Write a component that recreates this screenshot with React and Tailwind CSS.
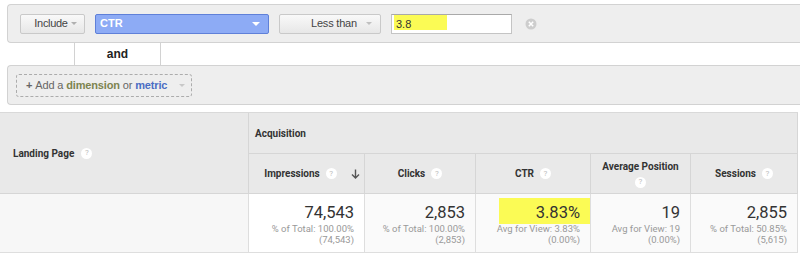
import React from "react";

const Caret = ({ color = "border-t-[#b0b0b0]", size = "border-x-[3px] border-t-[3px]" }) => (
  <span className={`inline-block w-0 h-0 border-x-transparent ${size} ${color}`} />
);

const Help = ({ className = "" }) => (
  <span
    className={`inline-flex items-center justify-center w-[11px] h-[11px] rounded-full bg-white text-[8px] font-normal text-[#bdbdbd] leading-none ${className}`}
  >
    ?
  </span>
);

function FilterBar() {
  return (
    <div className="pt-[4px] font-['Liberation_Sans',Arial,sans-serif]">
      {/* condition row */}
      <div className="ml-[7px] h-[39px] bg-[#eeeeee] border border-r-0 border-[#d2d2d2] rounded-l-[4px] flex items-center">
        <button className="ml-[12px] w-[65px] h-[20px] rounded-[2px] border border-[#c9c9c9] bg-gradient-to-b from-[#f9f9f9] to-[#e7e7e7] flex items-center justify-center gap-[3px] pl-[6px] text-[11px] text-[#444] tracking-[-0.3px]">
          Include
          <Caret />
        </button>
        <div className="ml-[10px] w-[174px] h-[20px] rounded-[2px] border border-[#5f80d8] bg-[#8dabf5] flex items-center justify-between pl-[4px] pr-[8px] text-[11px] font-bold text-white">
          CTR
          <Caret color="border-t-white" size="border-x-[4px] border-t-[4px]" />
        </div>
        <button className="ml-[10px] w-[102px] h-[20px] rounded-[2px] border border-[#c9c9c9] bg-gradient-to-b from-[#f9f9f9] to-[#e7e7e7] flex items-center pl-[31px] pr-[8px] text-[11px] text-[#444] tracking-[-0.2px]">
          Less than
          <span className="ml-auto flex">
            <Caret color="border-t-[#c0c0c0]" />
          </span>
        </button>
        <div className="ml-[10px] w-[121px] h-[20px] border border-[#c4c4c4] border-t-[#a9a9a9] bg-white flex items-start pl-[2px]">
          <span className="w-[53px] h-[15px] bg-[#fbfb55] flex items-end pl-[2px] text-[11px] leading-[12px] text-[#333]">
            3.8
          </span>
        </div>
        <svg className="ml-[13px]" width="12" height="12" viewBox="0 0 12 12">
          <circle cx="6" cy="6" r="5.5" fill="#cdcdcd" />
          <path d="M3.8 3.8 L8.2 8.2 M8.2 3.8 L3.8 8.2" stroke="#fff" strokeWidth="1.5" />
        </svg>
      </div>

      {/* and row */}
      <div className="h-[22px] flex">
        <div className="ml-[74px] w-[87px] border-x border-[#d2d2d2] flex items-center justify-center text-[12px] font-bold text-[#222]">
          and
        </div>
      </div>

      {/* add row */}
      <div className="ml-[7px] h-[40px] bg-[#eeeeee] border border-r-0 border-[#d2d2d2] rounded-l-[4px] pt-[8px]">
        <div className="ml-[8px] w-[176px] h-[23px] border border-dashed border-[#acacac] rounded-[3px] flex items-center pl-[9px] pr-[6px] text-[11px] tracking-[-0.15px] text-[#666]">
          <span className="font-bold mr-[3px]">+</span>
          <span>Add a&nbsp;</span>
          <span className="font-bold text-[#7d8450]">dimension</span>
          <span>&nbsp;or&nbsp;</span>
          <span className="font-bold text-[#4a6dc4]">metric</span>
          <span className="ml-auto flex">
            <Caret color="border-t-[#c8c8c8]" />
          </span>
        </div>
      </div>
    </div>
  );
}

const headers = [
  { label: "Impressions", sort: true },
  { label: "Clicks" },
  { label: "CTR" },
  { label: "Average Position", twoLine: true },
  { label: "Sessions" },
];

const cells = [
  { value: "74,543", sub: ["% of Total: 100.00%", "(74,543)"], bg: "bg-white" },
  { value: "2,853", sub: ["% of Total: 100.00%", "(2,853)"] },
  { value: "3.83%", sub: ["Avg for View: 3.83%", "(0.00%)"], mark: true },
  { value: "19", sub: ["Avg for View: 19", "(0.00%)"] },
  { value: "2,855", sub: ["% of Total: 50.85%", "(5,615)"] },
];

function ReportTable() {
  return (
    <div className="mt-[7px] w-[798px] border-t border-[#d9d9d9] font-['Roboto',Arial,sans-serif] grid grid-cols-[249px_116px_111px_115px_100px_107px] grid-rows-[41px_40px_59px]">
      <div className="row-span-2 bg-[#e9e9e9] border-r border-b border-[#d6d6d6] flex items-center pl-[13px] text-[10px] font-bold text-[#333]">
        Landing Page
        <Help className="ml-[7px]" />
      </div>
      <div className="col-span-5 bg-[#e9e9e9] border-r border-b border-[#d6d6d6] flex items-center pl-[6px] text-[10px] font-bold text-[#333]">
        Acquisition
      </div>

      {headers.map((h) => (
        <div
          key={h.label}
          className="relative bg-[#e9e9e9] border-r border-b border-[#d6d6d6] text-[10px] font-bold text-[#333]"
        >
          {h.twoLine ? (
            <div className="h-full flex flex-col items-center justify-center gap-[4px] pt-[1px]">
              <span className="leading-[12px]">{h.label}</span>
              <Help />
            </div>
          ) : (
            <div className={`h-full flex items-center justify-center ${h.sort ? "pr-[12px]" : ""}`}>
              {h.label}
              <Help className="ml-[6px]" />
            </div>
          )}
          {h.sort && (
            <svg
              className="absolute right-[4px] top-[15px]"
              width="9"
              height="10"
              viewBox="0 0 9 10"
            >
              <path d="M4.5 0.5 V9 M1 5.5 L4.5 9 L8 5.5" stroke="#555" strokeWidth="1.4" fill="none" />
            </svg>
          )}
        </div>
      ))}

      <div className="bg-[#f7f7f7] border-r border-b border-[#dedede]" />
      {cells.map((c) => (
        <div
          key={c.value}
          className={`${c.bg || "bg-[#fafafa]"} border-r border-b border-[#dedede] flex flex-col items-end pr-[10px] pt-[9px] text-right`}
        >
          {c.mark ? (
            <span className="-mt-[5px] -mr-[10px] w-[91px] pt-[5px] pb-[1px] -mb-[1px] pr-[10px] bg-[#fbfb55] text-[16.5px] leading-[20px] text-[#333]">
              {c.value}
            </span>
          ) : (
            <span className="text-[16.5px] leading-[20px] text-[#333]">{c.value}</span>
          )}
          {c.sub.map((s) => (
            <span key={s} className="text-[9.5px] leading-[11px] text-[#999] whitespace-nowrap">
              {s}
            </span>
          ))}
        </div>
      ))}
    </div>
  );
}

export default function App() {
  return (
    <div className="w-[800px] h-[254px] bg-white overflow-hidden">
      <FilterBar />
      <ReportTable />
    </div>
  );
}
